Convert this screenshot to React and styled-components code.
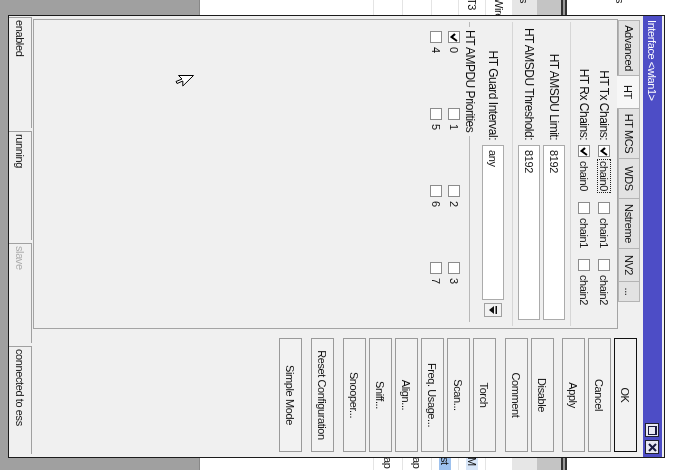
import React from 'react';
import styled, { createGlobalStyle } from 'styled-components';

const GlobalStyle = createGlobalStyle`
  html, body {
    margin: 0;
    padding: 0;
    background: #a0a0a0;
    overflow: hidden;
  }
`;

// the whole screen is captured turned a quarter clockwise
const Screen = styled.div`
  position: fixed;
  top: 0;
  left: 0;
  width: 470px;
  height: 674px;
  transform-origin: 0 0;
  transform: translateX(674px) rotate(90deg);
  background: #a0a0a0;
  overflow: hidden;
  font-family: "Liberation Sans", Arial, sans-serif;
  font-size: 11px;
  letter-spacing: -0.4px;
  color: #111;
`;

const BackWindow = styled.div`
  position: absolute;
  left: 0;
  top: 0;
  width: 470px;
  height: 474px;
  background: #fff;
  display: flex;
  flex-direction: column;
  border-bottom: 1px solid #888;
`;

const BackBand = styled.div`
  height: ${p => p.h}px;
  flex: none;
  background: ${p => p.bg || '#fff'};
  display: flex;
  align-items: center;
  justify-content: space-between;
  border-bottom: ${p => (p.line ? '1px solid #e4e4e4' : 'none')};
`;

const BackRule = styled.div`
  height: 2px;
  flex: none;
  background: #999;
  border-top: 2px solid #333;
  border-bottom: 2px solid #333;
`;

const BackText = styled.span`
  margin-left: -3px;
  margin-right: ${p => (p.right ? '-2px' : '0')};
  width: ${p => (p.right ? '14px' : 'auto')};
  padding: 0 1px;
  background: ${p => p.bg || 'transparent'};
  white-space: nowrap;
  overflow: hidden;
`;

const Dialog = styled.div`
  position: absolute;
  left: 15px;
  top: 9px;
  width: 443px;
  height: 657px;
  box-sizing: border-box;
  border: 1px solid #1c1c1c;
  background: #f0f0f0;
  display: flex;
  flex-direction: column;
`;

const TitleBar = styled.div`
  margin-top: 2px;
  height: 19px;
  flex: none;
  background: #4d4dc6;
  color: #fff;
  display: flex;
  align-items: center;
  padding: 0 3px 0 4px;
  gap: 3px;
`;

const TitleText = styled.span`
  flex: 1;
  white-space: nowrap;
`;

const TitleButton = styled.div`
  width: 14px;
  height: 14px;
  box-sizing: border-box;
  border: 1px solid #202030;
  background: #e8e8f2;
  display: flex;
  align-items: center;
  justify-content: center;
`;

const Body = styled.div`
  flex: 1;
  display: flex;
  margin-top: 2px;
  min-height: 0;
`;

const LeftColumn = styled.div`
  margin-left: 3px;
  width: 310px;
  display: flex;
  flex-direction: column;
`;

const Tabs = styled.div`
  height: 23px;
  flex: none;
  display: flex;
  align-items: flex-end;
  padding-left: 1px;
`;

const Tab = styled.div`
  width: ${p => p.w}px;
  height: ${p => (p.active ? 23 : 22)}px;
  box-sizing: border-box;
  flex: none;
  margin-left: -1px;
  margin-bottom: ${p => (p.active ? '-1px' : '0')};
  border: 1px solid #b4b4b4;
  border-bottom: ${p => (p.active ? 'none' : '1px solid #b4b4b4')};
  background: ${p => (p.active ? '#f7f7f7' : '#e2e2e2')};
  position: relative;
  z-index: ${p => (p.active ? 1 : 0)};
  display: flex;
  align-items: center;
  justify-content: center;
  white-space: nowrap;
  &:first-child { margin-left: 0; }
`;

const Panel = styled.div`
  flex: 1;
  border: 1px solid #a4a4a4;
  background: #f0f0f0;
  padding-top: 3px;
  display: flex;
  flex-direction: column;
`;

const FieldRow = styled.div`
  display: flex;
  align-items: center;
  height: ${p => p.h}px;
  margin-top: ${p => p.mt || 0}px;
  flex: none;
`;

const Label = styled.div`
  width: 120px;
  flex: none;
  text-align: right;
  white-space: nowrap;
  margin-right: 5px;
  font-size: 12px;
  letter-spacing: -0.5px;
`;

const CheckItem = styled.div`
  width: ${p => p.w}px;
  flex: none;
  display: flex;
  align-items: center;
`;

const Box = styled.div`
  width: 12px;
  height: 12px;
  box-sizing: border-box;
  flex: none;
  border: 1px solid #8c8c8c;
  background: #fff;
  display: flex;
  align-items: center;
  justify-content: center;
`;

const Caption = styled.span`
  margin-left: 3px;
  padding: 0 1px;
  white-space: nowrap;
  outline: ${p => (p.focused ? '1px dotted #222' : 'none')};
`;

const TextInput = styled.div`
  width: ${p => p.w}px;
  height: 22px;
  box-sizing: border-box;
  border: 1px solid #ababab;
  background: #fff;
  padding-left: 4px;
  display: flex;
  align-items: center;
`;

const DropButton = styled.div`
  width: 14px;
  height: 18px;
  box-sizing: border-box;
  margin-left: 3px;
  border: 1px solid #a0a0a0;
  background: #f2f2f2;
  display: flex;
  align-items: center;
  justify-content: center;
`;

const Separator = styled.div`
  height: 1px;
  flex: none;
  background: #d6d6d6;
  margin: ${p => p.m};
`;

const GroupHeader = styled.div`
  display: flex;
  align-items: center;
  height: 12px;
  margin: 6px 6px 0 2px;
  &::before {
    content: '';
    width: 5px;
    height: 1px;
    background: #b8b8b8;
  }
  &::after {
    content: '';
    flex: 1;
    height: 1px;
    background: #b8b8b8;
  }
`;

const GroupTitle = styled.span`
  margin: 0 4px 0 3px;
  white-space: nowrap;
  font-size: 12px;
  letter-spacing: -0.5px;
`;

const PriorityGrid = styled.div`
  display: grid;
  grid-template-columns: repeat(4, 77px);
  grid-auto-rows: 16px;
  row-gap: 2px;
  margin: 2px 0 0 11px;
`;

const ButtonColumn = styled.div`
  margin-left: 9px;
  width: 114px;
  padding-top: 4px;
  display: flex;
  flex-direction: column;
`;

const ButtonGroup = styled.div`
  display: flex;
  flex-direction: column;
  gap: 3px;
  margin-bottom: ${p => p.mb}px;
`;

const Button = styled.div`
  height: 23px;
  box-sizing: border-box;
  border: 1px solid ${p => (p.primary ? '#111' : '#9a9a9a')};
  background: #f2f2f2;
  display: flex;
  align-items: center;
  justify-content: center;
  white-space: nowrap;
`;

const StatusBar = styled.div`
  height: 23px;
  margin-top: 1px;
  flex: none;
  display: flex;
  gap: 3px;
  padding-left: 1px;
`;

const StatusCell = styled.div`
  width: ${p => p.w}px;
  flex: none;
  box-sizing: border-box;
  border-top: 1px solid #a0a0a0;
  border-left: 1px solid #a0a0a0;
  padding-left: 2px;
  display: flex;
  align-items: center;
  color: ${p => (p.dim ? '#ababab' : '#111')};
`;

const Cursor = styled.svg`
  position: absolute;
  left: 75px;
  top: 480px;
`;

const Tick = () => (
  <svg width="9" height="8" viewBox="0 0 9 8">
    <polyline points="1,3 4,6.5 8,1" fill="none" stroke="#000" strokeWidth="2" />
  </svg>
);

const Check = ({ on }) => <Box>{on && <Tick />}</Box>;

const tabs = [
  ['Advanced', 56],
  ['HT', 34, true],
  ['HT MCS', 51],
  ['WDS', 41],
  ['Nstreme', 51],
  ['NV2', 34],
  ['...', 21],
];

const buttonGroups = [
  { mb: 8, items: [['OK', true], ['Cancel'], ['Apply']] },
  { mb: 9, items: [['Disable'], ['Comment']] },
  { mb: 9, items: [['Torch'], ['Scan...'], ['Freq. Usage...'], ['Align...'], ['Sniff...'], ['Snooper...']] },
  { mb: 9, items: [['Reset Configuration']] },
  { mb: 0, items: [['Simple Mode']] },
];

const statuses = [
  ['enabled', 111],
  ['running', 109],
  ['slave', 100, true],
  ['connected to ess', 108],
];

const ChainRow = ({ label, first, focused }) => (
  <FieldRow h={20}>
    <Label>{label}</Label>
    {['chain0', 'chain1', 'chain2'].map((c, i) => (
      <CheckItem key={c} w={57}>
        <Check on={first && i === 0} />
        <Caption focused={focused && i === 0}>{c}</Caption>
      </CheckItem>
    ))}
  </FieldRow>
);

export default function App() {
  return (
    <>
      <GlobalStyle />
      <Screen>
        <BackWindow>
          <BackBand h={107}>
            <BackText>s</BackText>
          </BackBand>
          <BackRule />
          <BackBand h={24} bg="#c4c4c4" />
          <BackBand h={25} bg="#e6e6e6">
            <BackText>s</BackText>
          </BackBand>
          <BackBand h={26} line>
            <BackText>Wireless</BackText>
          </BackBand>
          <BackBand h={26} line>
            <BackText>T3</BackText>
            <BackText right bg="#d8e6f8">M</BackText>
          </BackBand>
          <BackBand h={26} line>
            <span />
            <BackText right bg="#9dc1ee">st</BackText>
          </BackBand>
          <BackBand h={28} line>
            <span />
            <BackText right>ap</BackText>
          </BackBand>
          <BackBand h={28} line>
            <span />
            <BackText right>ap</BackText>
          </BackBand>
        </BackWindow>

        <Dialog>
          <TitleBar>
            <TitleText>Interface &lt;wlan1&gt;</TitleText>
            <TitleButton>
              <svg width="9" height="9" viewBox="0 0 9 9">
                <rect x="0.5" y="0.5" width="8" height="8" fill="none" stroke="#1a1a40" />
                <rect x="0" y="0" width="9" height="2" fill="#1a1a40" />
              </svg>
            </TitleButton>
            <TitleButton>
              <svg width="9" height="9" viewBox="0 0 9 9">
                <path d="M1 1 L8 8 M8 1 L1 8" stroke="#1a1a40" strokeWidth="2" />
              </svg>
            </TitleButton>
          </TitleBar>

          <Body>
            <LeftColumn>
              <Tabs>
                {tabs.map(([name, w, active]) => (
                  <Tab key={name} w={w} active={active}>{name}</Tab>
                ))}
              </Tabs>
              <Panel>
                <ChainRow label="HT Tx Chains:" first focused />
                <ChainRow label="HT Rx Chains:" first />
                <Separator m="3px 2px 4px" />
                <FieldRow h={22} mt={1}>
                  <Label>HT AMSDU Limit:</Label>
                  <TextInput w={175}>8192</TextInput>
                </FieldRow>
                <FieldRow h={22} mt={3}>
                  <Label>HT AMSDU Threshold:</Label>
                  <TextInput w={175}>8192</TextInput>
                </FieldRow>
                <Separator m="5px 2px 8px" />
                <FieldRow h={22}>
                  <Label>HT Guard Interval:</Label>
                  <TextInput w={155}>any</TextInput>
                  <DropButton>
                    <svg width="8" height="8" viewBox="0 0 8 8">
                      <rect x="0" y="0" width="8" height="1.5" fill="#111" />
                      <polygon points="0,3 8,3 4,8" fill="#111" />
                    </svg>
                  </DropButton>
                </FieldRow>
                <GroupHeader>
                  <GroupTitle>HT AMPDU Priorities</GroupTitle>
                </GroupHeader>
                <PriorityGrid>
                  {[0, 1, 2, 3, 4, 5, 6, 7].map(n => (
                    <CheckItem key={n} w={77}>
                      <Check on={n === 0} />
                      <Caption>{n}</Caption>
                    </CheckItem>
                  ))}
                </PriorityGrid>
              </Panel>
            </LeftColumn>

            <ButtonColumn>
              {buttonGroups.map((g, i) => (
                <ButtonGroup key={i} mb={g.mb}>
                  {g.items.map(([text, primary]) => (
                    <Button key={text} primary={primary}>{text}</Button>
                  ))}
                </ButtonGroup>
              ))}
            </ButtonColumn>
          </Body>

          <StatusBar>
            {statuses.map(([text, w, dim]) => (
              <StatusCell key={text} w={w} dim={dim}>{text}</StatusCell>
            ))}
          </StatusBar>
        </Dialog>

        <Cursor width="12" height="19" viewBox="0 0 12 19">
          <path d="M0.5 0.5 L0.5 15.5 L4 12 L6.5 18 L8.5 17 L6 11.2 L11 11.2 Z" fill="#fff" stroke="#000" />
        </Cursor>
      </Screen>
    </>
  );
}
